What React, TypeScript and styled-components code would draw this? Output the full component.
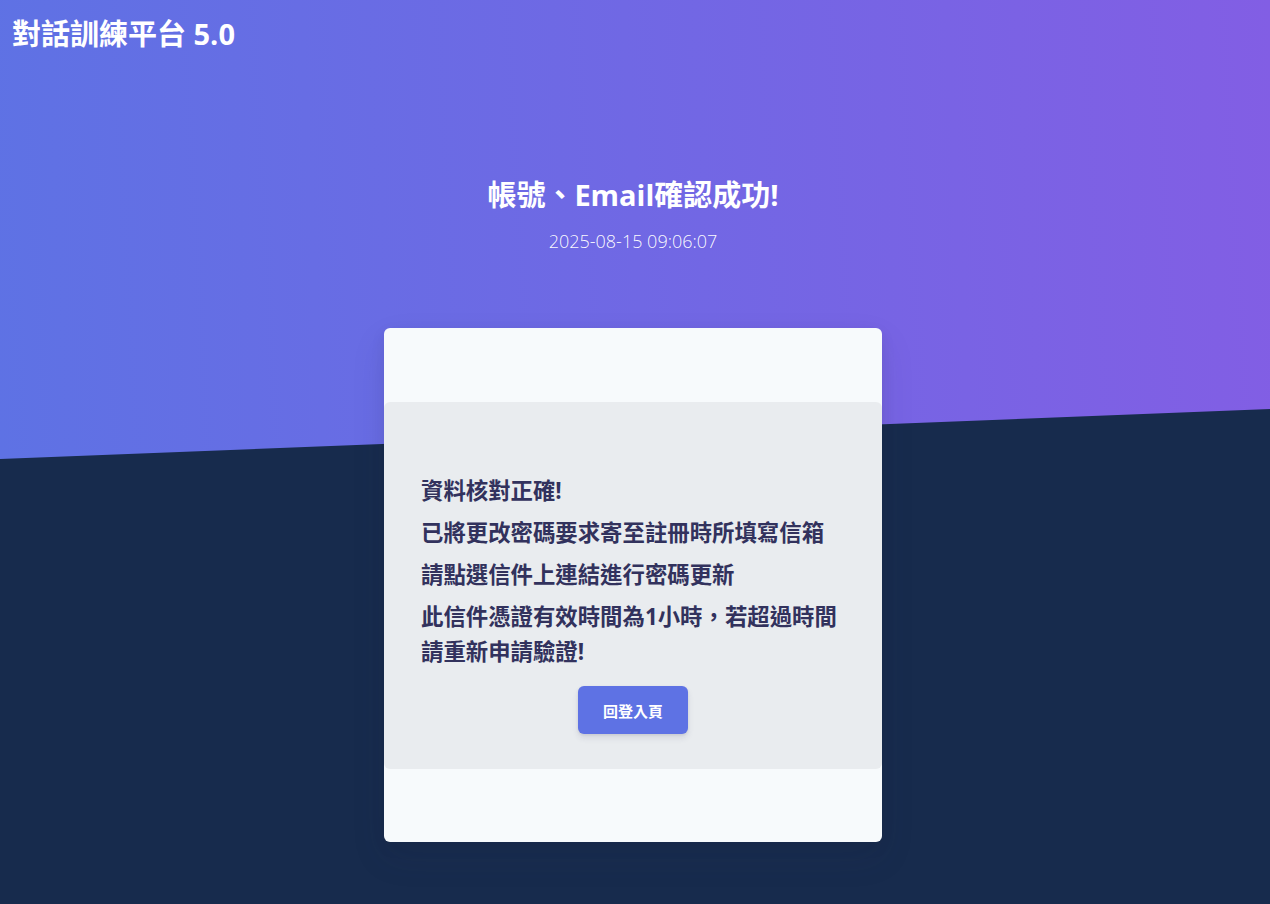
import React from 'react'
import styled, { createGlobalStyle } from 'styled-components'

const GlobalStyle = createGlobalStyle`
  html, body {
    margin: 0;
    padding: 0;
  }
  body {
    font-family: 'Open Sans', 'Noto Sans CJK TC', sans-serif;
    background: #172b4d;
  }
`

const messages = [
  '資料核對正確!',
  '已將更改密碼要求寄至註冊時所填寫信箱',
  '請點選信件上連結進行密碼更新',
  '此信件憑證有效時間為1小時，若超過時間請重新申請驗證!'
]

const App: React.FC = () => {
  return (
    <Page>
      <GlobalStyle />
      <Header>
        <Brand>對話訓練平台 5.0</Brand>
        <Heading>
          <Title>帳號、Email確認成功!</Title>
          <Stamp>2025-08-15 09:06:07</Stamp>
        </Heading>
      </Header>
      <Main>
        <Card>
          <Panel>
            {messages.map((m) => (
              <Message key={m}>{m}</Message>
            ))}
            <Actions>
              <PrimaryButton type="button">回登入頁</PrimaryButton>
            </Actions>
          </Panel>
        </Card>
      </Main>
    </Page>
  )
}

const Page = styled.div`
  min-height: 100vh;
  background: #172b4d;
  overflow: hidden;
`

const Header = styled.header`
  height: 459px;
  box-sizing: border-box;
  padding: 14px 0 0;
  background: linear-gradient(87deg, #5e72e4 0, #825ee4 100%);
  clip-path: polygon(0 0, 100% 0, 100% 409px, 0 459px);
`

const Brand = styled.div`
  padding-left: 12px;
  font-size: 29px;
  line-height: 40px;
  font-weight: 700;
  color: #fff;
`

const Heading = styled.div`
  display: flex;
  flex-direction: column;
  align-items: center;
  gap: 13px;
  margin-top: 121px;
  padding-right: 4px;
`

const Title = styled.h1`
  margin: 0;
  font-size: 29px;
  line-height: 40px;
  font-weight: 700;
  color: #fff;
`

const Stamp = styled.div`
  font-size: 18px;
  line-height: 26px;
  font-weight: 300;
  color: rgba(255, 255, 255, 0.97);
`

const Main = styled.main`
  position: relative;
  z-index: 1;
  display: flex;
  justify-content: center;
  margin-top: -131px;
  padding-right: 4px;
  padding-bottom: 62px;
`

const Card = styled.section`
  width: 498px;
  box-sizing: border-box;
  padding: 74px 0 73px;
  background: #f7fafc;
  border-radius: 6px;
  box-shadow: 0 15px 35px rgba(50, 50, 93, 0.1), 0 5px 15px rgba(0, 0, 0, 0.07);
`

const Panel = styled.div`
  padding: 71px 37px 35px;
  background: #e9ecef;
  border-radius: 6px;
`

const Message = styled.p`
  margin: 0 0 7px;
  font-size: 22.4px;
  line-height: 35px;
  font-weight: 700;
  color: #32325d;
`

const Actions = styled.div`
  display: flex;
  justify-content: center;
  margin-top: 17px;
`

const PrimaryButton = styled.button`
  height: 48px;
  padding: 0 25px;
  border: none;
  border-radius: 6px;
  background: #5e72e4;
  color: #fff;
  font-family: inherit;
  font-size: 15px;
  font-weight: 700;
  box-shadow: 0 4px 6px rgba(50, 50, 93, 0.11), 0 1px 3px rgba(0, 0, 0, 0.08);
  cursor: pointer;
`

export default App
